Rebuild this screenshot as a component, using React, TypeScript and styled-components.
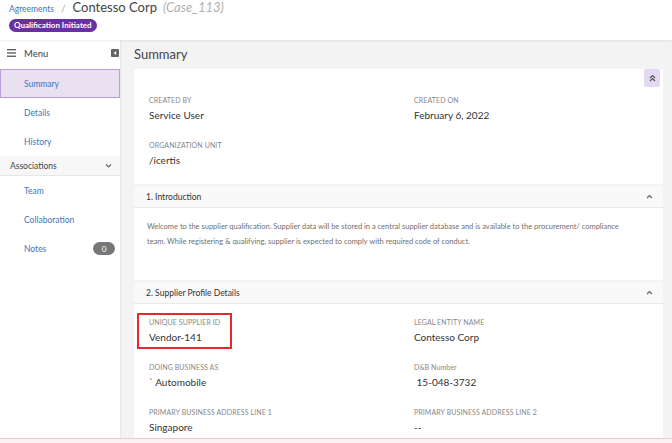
import React from 'react';
import styled, { createGlobalStyle } from 'styled-components';

const GlobalStyle = createGlobalStyle`
  html, body {
    margin: 0;
    padding: 0;
    background: #f3f3f3;
  }
  body {
    font-family: Lato, "Noto Sans", sans-serif;
    color: #333;
  }
  * {
    box-sizing: border-box;
  }
`;

const Page = styled.div`
  width: 672px;
  height: 443px;
  display: flex;
  flex-direction: column;
  overflow: hidden;
  border-bottom: 4px solid #fdf1f4;
  position: relative;
  &::after {
    content: '';
    position: absolute;
    left: 0;
    right: 0;
    bottom: 0;
    height: 1px;
    background: #f3c6d2;
  }
`;

const Header = styled.header`
  height: 40px;
  flex: none;
  background: #fff;
  padding: 0 9px;
  display: flex;
  flex-direction: column;
  align-items: flex-start;
  gap: 3px;
  box-shadow: 0 1px 2px rgba(0, 0, 0, 0.08);
  position: relative;
  z-index: 2;
`;

const Crumbs = styled.div`
  display: flex;
  align-items: baseline;
  height: 15px;
  line-height: 15px;
`;

const CrumbLink = styled.a`
  font-size: 8.5px;
  color: #3a76c4;
  text-decoration: none;
`;

const CrumbSep = styled.span`
  font-size: 10px;
  color: #aaa;
  margin: 0 7px;
`;

const CaseTitle = styled.span`
  font-size: 13px;
  color: #444;
`;

const CaseId = styled.span`
  font-size: 13px;
  color: #b0b0b0;
  font-style: italic;
  margin-left: 6px;
`;

const Badge = styled.span`
  display: block;
  margin-top: 1px;
  background: #6a2ea6;
  color: #fff;
  font-size: 8px;
  font-weight: 700;
  line-height: 13px;
  padding: 0 5px;
  border-radius: 7px;
`;

const Body = styled.div`
  flex: 1;
  display: flex;
  min-height: 0;
`;

const Sidebar = styled.nav`
  width: 120px;
  flex: none;
  background: #fff;
  box-shadow: 1px 0 2px rgba(0, 0, 0, 0.06);
  display: flex;
  flex-direction: column;
`;

const MenuHead = styled.div`
  height: 29px;
  flex: none;
  display: flex;
  align-items: center;
  padding: 0 1px 3px 7px;
  font-size: 9.5px;
  color: #444;
`;

const MenuLabel = styled.span`
  flex: 1;
  margin-left: 8px;
`;

const NavItem = styled.a<{ $active?: boolean }>`
  height: 29px;
  flex: none;
  display: flex;
  align-items: center;
  justify-content: space-between;
  padding: 0 4px 0 23px;
  font-size: 8.5px;
  color: #3a76c4;
  text-decoration: none;
  background: ${p => (p.$active ? '#e9e0f1' : 'transparent')};
  border: 1px solid ${p => (p.$active ? '#b99bd9' : 'transparent')};
`;

const GroupHead = styled.div`
  height: 20px;
  flex: none;
  display: flex;
  align-items: center;
  justify-content: space-between;
  padding: 0 8px 0 10px;
  font-size: 8.5px;
  color: #444;
  background: #f7f7f7;
  border-bottom: 1px solid #e6e6e6;
`;

const Count = styled.span`
  background: #777;
  color: #fff;
  font-size: 8px;
  width: 22px;
  height: 13px;
  border-radius: 7px;
  display: flex;
  align-items: center;
  justify-content: center;
`;

const Main = styled.main`
  flex: 1;
  padding: 0 9px 0 14px;
  display: flex;
  flex-direction: column;
  gap: 2px;
  min-width: 0;
  & > * {
    flex: none;
  }
`;

const PageTitle = styled.h1`
  margin: 0;
  height: 27px;
  display: flex;
  align-items: center;
  font-size: 13px;
  font-weight: 400;
  color: #444;
  padding-top: 1px;
`;

const Card = styled.section`
  background: #fff;
  position: relative;
`;

const CollapseBtn = styled.button`
  position: absolute;
  top: 0;
  right: 3px;
  width: 16px;
  height: 18px;
  border: none;
  border-radius: 2px;
  background: #e3d7f4;
  display: flex;
  align-items: center;
  justify-content: center;
  padding: 0;
`;

const Fields = styled.div<{ $top: number }>`
  display: grid;
  grid-template-columns: 265px 1fr;
  row-gap: 15px;
  padding: ${p => p.$top}px 15px 14px;
`;

const Field = styled.div<{ $flagged?: boolean }>`
  display: flex;
  flex-direction: column;
  position: relative;
  ${p =>
    p.$flagged &&
    `
    &::before {
      content: '';
      position: absolute;
      left: -12px;
      top: -4px;
      width: 91px;
      height: 32px;
      border: 2px solid #e8282b;
    }
  `}
`;

const Label = styled.span`
  font-size: 7px;
  line-height: 10px;
  color: #888;
  text-transform: uppercase;
  letter-spacing: 0.1px;
`;

const PlainLabel = styled(Label)`
  text-transform: none;
`;

const Value = styled.span`
  font-size: 10px;
  line-height: 20px;
  color: #333;
`;

const SectionHead = styled.div`
  height: 22px;
  display: flex;
  align-items: center;
  justify-content: space-between;
  padding: 0 10px 0 12px;
  background: #f9f9f9;
  border-bottom: 1px solid #e8e8e8;
  font-size: 8.5px;
  color: #333;
`;

const Intro = styled.p`
  margin: 0;
  padding: 11px 40px 0 13px;
  height: 72px;
  font-size: 7.5px;
  line-height: 15px;
  color: #707070;
`;

const Hamburger = () => (
  <svg width="9" height="8" viewBox="0 0 9 8">
    <rect y="0" width="9" height="1.3" fill="#555" />
    <rect y="3.3" width="9" height="1.3" fill="#555" />
    <rect y="6.6" width="9" height="1.3" fill="#555" />
  </svg>
);

const PanelToggle = () => (
  <svg width="8" height="8" viewBox="0 0 8 8">
    <rect width="8" height="8" rx="1" fill="#666" />
    <path d="M5.2 2 L2.6 4 L5.2 6 Z" fill="#fff" />
  </svg>
);

const Caret = ({ up }: { up?: boolean }) => (
  <svg width="7" height="5" viewBox="0 0 7 5">
    <path
      d={up ? 'M1 4 L3.5 1.5 L6 4' : 'M1 1.5 L3.5 4 L6 1.5'}
      fill="none"
      stroke="#666"
      strokeWidth="1.2"
    />
  </svg>
);

const DoubleUp = () => (
  <svg width="7" height="8" viewBox="0 0 7 8">
    <path d="M1 4 L3.5 1.5 L6 4 M1 7 L3.5 4.5 L6 7" fill="none" stroke="#555" strokeWidth="1.2" />
  </svg>
);

export default function App() {
  return (
    <Page>
      <GlobalStyle />
      <Header>
        <Crumbs>
          <CrumbLink>Agreements</CrumbLink>
          <CrumbSep>/</CrumbSep>
          <CaseTitle>Contesso Corp</CaseTitle>
          <CaseId>(Case_113)</CaseId>
        </Crumbs>
        <Badge>Qualification Initiated</Badge>
      </Header>
      <Body>
        <Sidebar>
          <MenuHead>
            <Hamburger />
            <MenuLabel>Menu</MenuLabel>
            <PanelToggle />
          </MenuHead>
          <NavItem $active>Summary</NavItem>
          <NavItem>Details</NavItem>
          <NavItem>History</NavItem>
          <GroupHead>
            Associations
            <Caret />
          </GroupHead>
          <NavItem>Team</NavItem>
          <NavItem>Collaboration</NavItem>
          <NavItem>
            Notes
            <Count>0</Count>
          </NavItem>
        </Sidebar>
        <Main>
          <PageTitle>Summary</PageTitle>
          <Card>
            <CollapseBtn>
              <DoubleUp />
            </CollapseBtn>
            <Fields $top={26}>
              <Field>
                <Label>Created By</Label>
                <Value>Service User</Value>
              </Field>
              <Field>
                <Label>Created On</Label>
                <Value>February 6, 2022</Value>
              </Field>
              <Field>
                <Label>Organization Unit</Label>
                <Value>/icertis</Value>
              </Field>
            </Fields>
          </Card>
          <Card>
            <SectionHead>
              1. Introduction
              <Caret up />
            </SectionHead>
            <Intro>
              Welcome to the supplier qualification. Supplier data will be stored in a central supplier database and
              is available to the procurement/ compliance team. While registering &amp; qualifying, supplier is
              expected to comply with required code of conduct.
            </Intro>
          </Card>
          <Card>
            <SectionHead>
              2. Supplier Profile Details
              <Caret up />
            </SectionHead>
            <Fields $top={13}>
              <Field $flagged>
                <Label>Unique Supplier ID</Label>
                <Value>Vendor-141</Value>
              </Field>
              <Field>
                <Label>Legal Entity Name</Label>
                <Value>Contesso Corp</Value>
              </Field>
              <Field>
                <Label>Doing Business As</Label>
                <Value>` Automobile</Value>
              </Field>
              <Field>
                <PlainLabel>D&amp;B Number</PlainLabel>
                <Value>&nbsp;15-048-3732</Value>
              </Field>
              <Field>
                <Label>Primary Business Address Line 1</Label>
                <Value>Singapore</Value>
              </Field>
              <Field>
                <Label>Primary Business Address Line 2</Label>
                <Value>--</Value>
              </Field>
            </Fields>
          </Card>
        </Main>
      </Body>
    </Page>
  );
}
